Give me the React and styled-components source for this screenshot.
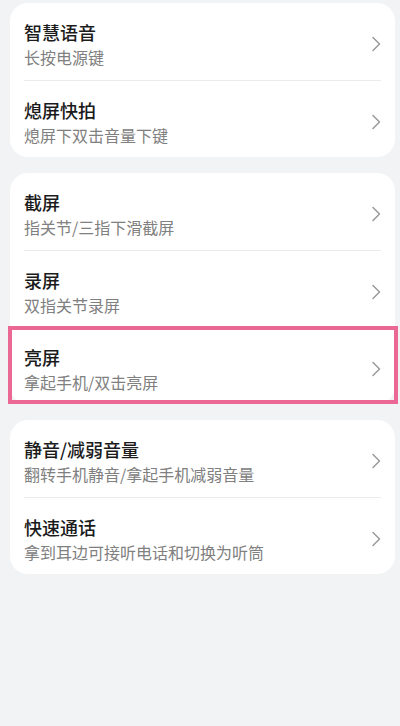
import React from 'react';
import styled, { createGlobalStyle } from 'styled-components';

const GlobalStyle = createGlobalStyle`
  html, body {
    margin: 0;
    padding: 0;
    background: #f1f3f5;
  }
  body {
    font-family: "Noto Sans CJK SC", "Noto Sans", sans-serif;
  }
`;

const Page = styled.div`
  width: 400px;
  min-height: 726px;
  box-sizing: border-box;
  padding: 3px 5px 0 10px;
  display: flex;
  flex-direction: column;
  gap: 16px;
  background: #f1f3f5;
`;

const Card = styled.div`
  background: #ffffff;
  border-radius: 18px;
  padding: 0 14px 0 14px;
`;

const Row = styled.div`
  position: relative;
  height: 77px;
  box-sizing: border-box;
  padding-top: 5px;
  display: flex;
  align-items: center;
  justify-content: space-between;
  border-top: ${({ $first }) => ($first ? 'none' : '1px solid #ebebeb')};

  ${({ $highlight }) =>
    $highlight &&
    `
    &::after {
      content: '';
      position: absolute;
      left: -16px;
      right: -17px;
      top: -2px;
      bottom: 0;
      border: 4px solid #ea6893;
      pointer-events: none;
    }
  `}
`;

const Texts = styled.div`
  display: flex;
  flex-direction: column;
  gap: 2px;
`;

const Title = styled.div`
  font-size: 18px;
  line-height: 24px;
  font-weight: 500;
  color: #1b1b1b;
`;

const Sub = styled.div`
  font-size: 16px;
  line-height: 22px;
  color: #808080;
`;

const Chevron = () => (
  <svg width="10" height="16" viewBox="0 0 10 16">
    <polyline
      points="2,1.5 8.5,8 2,14.5"
      fill="none"
      stroke="#9a9a9a"
      strokeWidth="1.5"
      strokeLinecap="round"
      strokeLinejoin="round"
    />
  </svg>
);

const groups = [
  [
    { title: '智慧语音', sub: '长按电源键' },
    { title: '熄屏快拍', sub: '熄屏下双击音量下键' },
  ],
  [
    { title: '截屏', sub: '指关节/三指下滑截屏' },
    { title: '录屏', sub: '双指关节录屏' },
    { title: '亮屏', sub: '拿起手机/双击亮屏', highlight: true },
  ],
  [
    { title: '静音/减弱音量', sub: '翻转手机静音/拿起手机减弱音量' },
    { title: '快速通话', sub: '拿到耳边可接听电话和切换为听筒' },
  ],
];

export default function App() {
  return (
    <>
      <GlobalStyle />
      <Page>
        {groups.map((items, gi) => (
          <Card key={gi}>
            {items.map((it, i) => (
              <Row key={it.title} $first={i === 0} $highlight={it.highlight}>
                <Texts>
                  <Title>{it.title}</Title>
                  <Sub>{it.sub}</Sub>
                </Texts>
                <Chevron />
              </Row>
            ))}
          </Card>
        ))}
      </Page>
    </>
  );
}
